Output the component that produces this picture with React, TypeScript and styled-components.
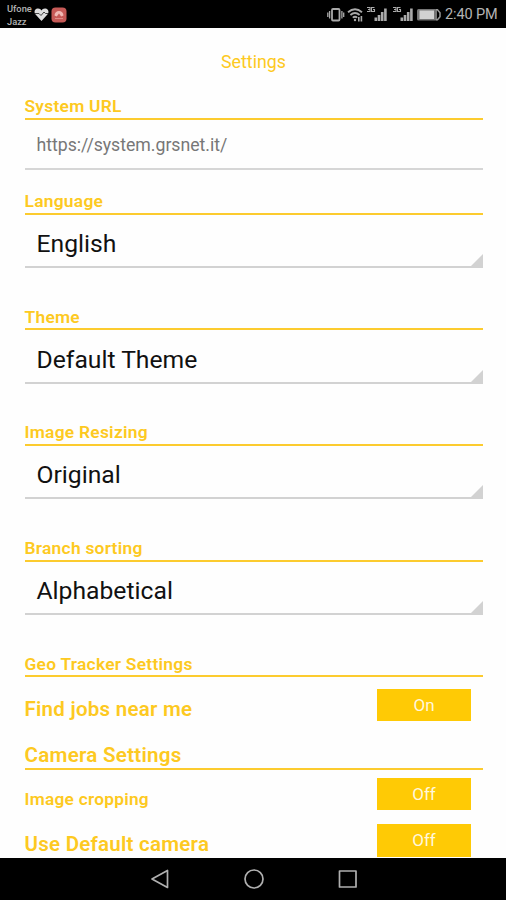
import React from "react";
import styled, { createGlobalStyle } from "styled-components";

const GlobalStyle = createGlobalStyle`
  * { box-sizing: border-box; }
  body { margin: 0; background: #fff; font-family: Roboto, "Liberation Sans", sans-serif; }
`;

const Screen = styled.div`
  width: 506px;
  height: 900px;
  display: flex;
  flex-direction: column;
  overflow: hidden;
  background: #fefefe;
`;

const StatusBar = styled.header`
  height: 28px;
  flex: none;
  display: flex;
  align-items: center;
  justify-content: space-between;
  padding: 0 9px 0 7px;
  background: #000;
  color: #b4b4b4;
`;

const StatusGroup = styled.div`
  display: flex;
  align-items: center;
`;

const Carriers = styled.div`
  width: 27px;
  padding-top: 2px;
  font-size: 9.3px;
  line-height: 13px;
  font-weight: 500;
  white-space: nowrap;
`;

const Clock = styled.span`
  width: 52px;
  font-size: 14.5px;
  line-height: 28px;
  padding-top: 1px;
  white-space: nowrap;
  letter-spacing: -0.1px;
`;

const Content = styled.main`
  flex: none;
  height: 830.3px;
  overflow: hidden;
  padding: 0 23.5px 0 24.5px;
  color: #fdc921;
`;

const Title = styled.h1`
  margin: 0;
  height: 61px;
  padding-top: 6px;
  font-size: 17.8px;
  font-weight: 400;
  line-height: 55px;
  text-align: center;
`;

const Heading = styled.h2<{ $height: number; $large?: boolean }>`
  margin: 0;
  height: ${(p) => p.$height}px;
  display: flex;
  align-items: flex-end;
  padding-bottom: ${(p) => (p.$large ? 1.3 : 1.7)}px;
  border-bottom: 2px solid #fccb2e;
  font-size: ${(p) => (p.$large ? 20.6 : 17.4)}px;
  line-height: ${(p) => (p.$large ? 24 : 20)}px;
  font-weight: 600;
  letter-spacing: 0.25px;
`;

const UrlField = styled.div`
  height: 50px;
  padding: 0 12px;
  border-bottom: 2px solid #d6d6d6;
  color: #777;
  font-size: 17.7px;
  line-height: 50px;
  letter-spacing: -0.02px;
`;

const Select = styled.div`
  height: 53.4px;
  display: flex;
  align-items: flex-end;
  justify-content: space-between;
  padding-left: 12px;
  border-bottom: 2px solid #d2d2d2;
  color: #111;
  font-size: 24.7px;
  line-height: 44px;
`;

const Corner = styled.svg`
  width: 12px;
  height: 12px;
  fill: #d2d2d2;
`;

const SettingRow = styled.div<{ $height: number; $top: number }>`
  height: ${(p) => p.$height}px;
  padding: ${(p) => p.$top}px 12px 0 0;
  display: flex;
  justify-content: space-between;
  align-items: flex-start;
`;

const RowLabel = styled.span<{ $small?: boolean }>`
  font-size: ${(p) => (p.$small ? 17.3 : 20.5)}px;
  line-height: 24px;
  padding-top: ${(p) => (p.$small ? 9 : 7.8)}px;
  font-weight: 600;
  letter-spacing: 0.25px;
`;

const Toggle = styled.button`
  width: 94px;
  height: 32.5px;
  padding: 0 0 0 1px;
  border: 0;
  background: #ffca05;
  color: #fff7dd;
  font: 400 17px/33px Roboto, sans-serif;
`;

const NavBar = styled.nav`
  flex: 1;
  background: #000;
  display: flex;
  justify-content: center;
  align-items: center;
  gap: 72px;
  padding-left: 1px;
`;

const NavIcon = styled.svg`
  width: 22px;
  height: 22px;
  fill: none;
  stroke: #b0b0b0;
  stroke-width: 1.7;
  stroke-linejoin: round;
`;

const Signal = () => (
  <svg width="24" height="18" viewBox="0 0 24 18" fill="#aaa">
    <path d="M0 2.5h3v4H0M1 4.5h2M7.5 2.5H4.5v4h3v-2H6" fill="none" stroke="#aaa" strokeWidth="1.1" />
    <path d="M7.5 12.5h2.6V16H7.5zM10.7 10h2.6v6h-2.6zM13.9 7h2.6v9h-2.6zM17.1 3.5h2.6V16h-2.6z" />
  </svg>
);

const selects = [
  { label: "Language", value: "English", height: 44.7 },
  { label: "Theme", value: "Default Theme", height: 62.3 },
  { label: "Image Resizing", value: "Original", height: 62.3 },
  { label: "Branch sorting", value: "Alphabetical", height: 62.3 },
];

export default function App() {
  return (
    <>
      <GlobalStyle />
      <Screen>
        <StatusBar>
          <StatusGroup>
            <Carriers>
              <div>Ufone</div>
              <div>Jazz</div>
            </Carriers>
            <svg width="34" height="18" viewBox="0 0 34 18">
              <path d="M7.5 16L1.8 9.8C-.8 6.5 1 3.8 3.6 3.5 5.5 3.3 6.8 4.3 7.5 5.5 8.2 4.3 9.5 3.3 11.4 3.5 14 3.8 15.8 6.5 13.2 9.8z" fill="#ddd" />
              <path d="M1 8.5h4l2 2 3-3.5 1.5 1.5H14" fill="none" stroke="#444" />
              <rect x="17.5" y="2.5" width="15" height="15" rx="4" fill="#c65a57" />
              <path d="M20.5 10.5a4.5 4.5 0 0 1 9 0l-2.3 1-2.2-3-2.2 3z" fill="#efb9b4" />
              <path d="M21 13.5h8" stroke="#e08c87" />
            </svg>
          </StatusGroup>
          <StatusGroup>
            <svg width="40" height="18" viewBox="0 0 40 18" fill="none" stroke="#aaa" strokeWidth="1.8">
              <rect x="5" y="4" width="7.5" height="11.5" rx="1" />
              <path d="M2.6 6v7.5M14.9 6v7.5M.8 7.5v4.5M16.7 7.5v4.5" strokeWidth="1.3" />
              <path d="M21 7.2q7-6 14 0M23.4 10q4.6-4 9.2 0M25.8 12.7q2.2-2 4.4 0" />
              <circle cx="28" cy="15" r="1.2" fill="#aaa" stroke="none" />
              <path d="M31.8 12v4.5M34.4 11v5.5" strokeWidth="1.6" />
            </svg>
            <Signal />
            <svg width="2" height="18" />
            <Signal />
            <svg width="28" height="18" viewBox="0 0 28 18">
              <rect x="0" y="4" width="20" height="11.5" rx="1.5" fill="#777" />
              <rect x="2.5" y="5.5" width="14.5" height="8.5" fill="#d2d2d2" />
              <path d="M19 4.8h1.5l2.5 3v4l-2.5 3H19" fill="none" stroke="#999" strokeWidth="1.5" />
            </svg>
            <Clock>2:40 PM</Clock>
          </StatusGroup>
        </StatusBar>
        <Content>
          <Title>Settings</Title>
          <Heading $height={31}>System URL</Heading>
          <UrlField>https://system.grsnet.it/</UrlField>
          {selects.map((s) => (
            <React.Fragment key={s.label}>
              <Heading $height={s.height}>{s.label}</Heading>
              <Select>
                <span>{s.value}</span>
                <Corner viewBox="0 0 12 12"><path d="M12 0v12H0z" /></Corner>
              </Select>
            </React.Fragment>
          ))}
          <Heading $height={62.3}>Geo Tracker Settings</Heading>
          <SettingRow $height={61} $top={11.5}>
            <RowLabel>Find jobs near me</RowLabel>
            <Toggle>On</Toggle>
          </SettingRow>
          <Heading $height={32} $large>Camera Settings</Heading>
          <SettingRow $height={46} $top={7.5}>
            <RowLabel $small>Image cropping</RowLabel>
            <Toggle>Off</Toggle>
          </SettingRow>
          <SettingRow $height={44} $top={8}>
            <RowLabel>Use Default camera</RowLabel>
            <Toggle>Off</Toggle>
          </SettingRow>
        </Content>
        <NavBar>
          <NavIcon viewBox="0 0 22 22"><path d="M18.5 2.5v17L3 11z" /></NavIcon>
          <NavIcon viewBox="0 0 22 22"><circle cx="11" cy="11" r="9" /></NavIcon>
          <NavIcon viewBox="0 0 22 22"><rect x="2.5" y="3" width="16.5" height="16" /></NavIcon>
        </NavBar>
      </Screen>
    </>
  );
}
